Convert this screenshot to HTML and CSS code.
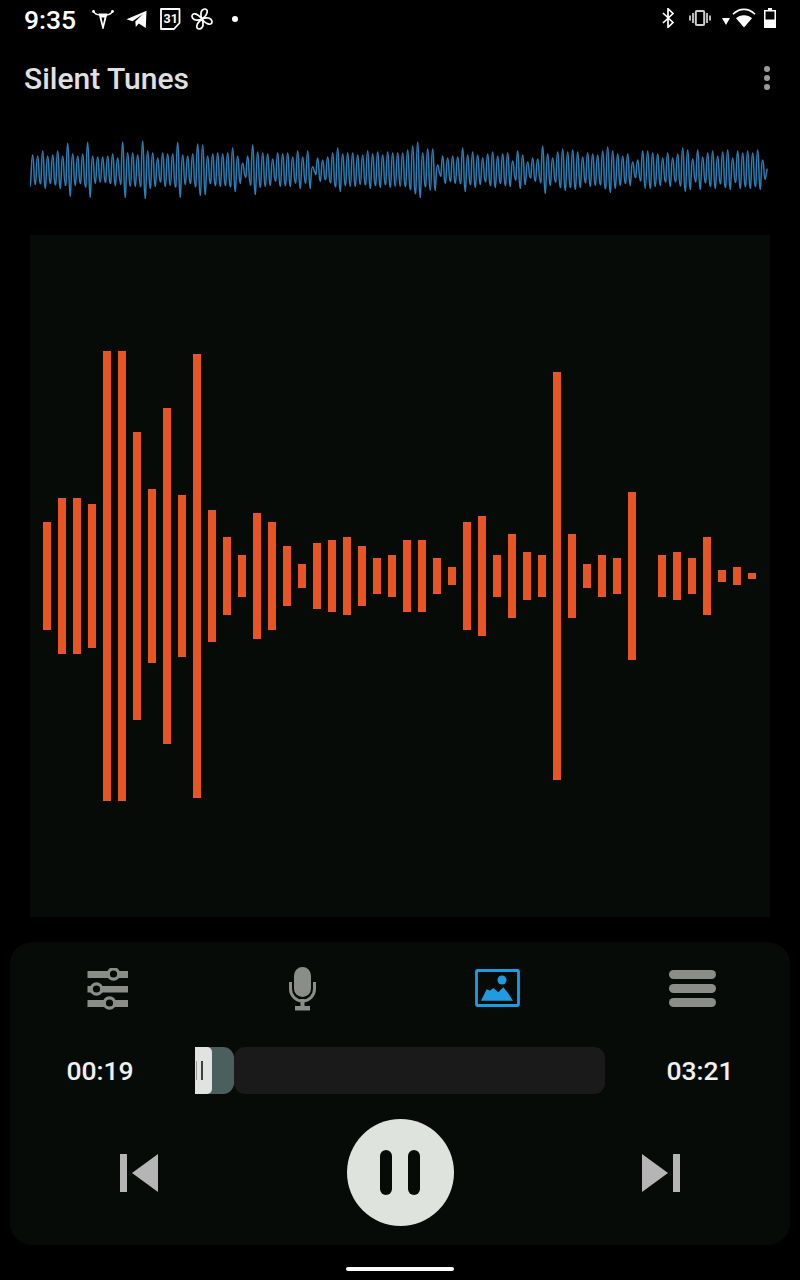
FILE: index.html
```html
<!DOCTYPE html>
<html lang="en">
<head>
  <meta charset="UTF-8">
  <title>Silent Tunes</title>
  <link rel="stylesheet" href="styles.css">
</head>
<body>
<div class="status-bar">
  <div class="status-left">
    <span class="clock">9:35</span>
    <svg class="ic ic-skull" width="22" height="20" viewBox="0 0 22 20">
      <path d="M1.500 2c1 3 3 3.800 6.500 4M20.500 2c-1 3-3 3.800-6.500 4" fill="none" stroke="#fff" stroke-width="1.500"/>
      <circle cx="1.500" cy="2.500" r="1.400" fill="#fff"/><circle cx="20.500" cy="2.500" r="1.400" fill="#fff"/>
      <path d="M6.500 4.500h9L13.800 11l-2.300 9h-1L8.200 11z" fill="#fff"/>
      <path d="M9.500 8.500h3L11 15z" fill="#000"/>
    </svg>
    <svg class="ic ic-plane" width="22" height="18" viewBox="0 0 22 18">
      <path d="M0.500 9.300 20.500 0.800 19.800 18 12.800 13.500 9.800 17 9.300 11.600 17 4 6.500 11.300z" fill="#fff"/>
    </svg>
    <svg class="ic ic-cal" width="22" height="22" viewBox="0 0 22 22">
      <path d="M2 1h18.500v14l-5.500 6H2z" fill="none" stroke="#fff" stroke-width="1.800" stroke-linejoin="round"/>
      <text x="4.500" y="15" class="cal-num">31</text>
    </svg>
    <svg class="ic ic-fan" width="22" height="22" viewBox="0 0 22 22" fill="none" stroke="#fff" stroke-width="1.700">
      <path d="M11 11C9 7 9.500 1.500 13.500 1 17.500 .8 17.500 6 11 11z"/>
      <path d="M11 11C9 7 9.500 1.500 13.500 1 17.500 .8 17.500 6 11 11z" transform="rotate(90 11 11)"/>
      <path d="M11 11C9 7 9.500 1.500 13.500 1 17.500 .8 17.500 6 11 11z" transform="rotate(180 11 11)"/>
      <path d="M11 11C9 7 9.500 1.500 13.500 1 17.500 .8 17.500 6 11 11z" transform="rotate(270 11 11)"/>
    </svg>
    <span class="dot"></span>
  </div>
  <div class="status-right">
    <svg class="ic ic-bt" width="13" height="20" viewBox="0 0 13 20">
      <path d="M1 5l10 9.500-5 4.800V.7l5 4.800L1 15" fill="none" stroke="#fff" stroke-width="1.700"/>
    </svg>
    <svg class="ic ic-vib" width="22" height="16" viewBox="0 0 22 16" fill="none">
      <rect x="6.800" y="1" width="8.400" height="14" rx="1.200" stroke="#d0d0d0" stroke-width="2"/>
      <path d="M4 3v10M1 5.500v5M18 3v10M21 5.500v5" stroke="#b8b8b8" stroke-width="2"/>
    </svg>
    <svg class="ic ic-tri" width="8" height="7" viewBox="0 0 8 7"><path d="M0 0h8L4 7z" fill="#fff"/></svg>
    <svg class="ic ic-wifi" width="24" height="20" viewBox="0 0 24 20">
      <path d="M12 19.500 4 10.200C6 8.500 9 7.300 12 7.300s6 1.200 8 2.900z" fill="#fff"/>
      <path d="M1 6.300C4 3 8 1.300 12 1.300s8 1.700 11 5" fill="none" stroke="#fff" stroke-width="1.700"/>
    </svg>
    <svg class="ic ic-bat" width="12" height="20" viewBox="0 0 12 20">
      <path d="M4 0h4v2h4v18H0V2h4z" fill="#fff"/>
      <rect x="1.500" y="3.500" width="9" height="8" fill="#000"/>
    </svg>
  </div>
</div>

<div class="app-bar">
  <h1 class="title">Silent Tunes</h1>
  <div class="kebab"><span></span><span></span><span></span></div>
</div>

<svg class="wave" width="740" height="80" viewBox="0 0 740 80">
  <path id="wave-line" fill="none" stroke="#2a80b8" stroke-width="1.500"/>
</svg>

<div class="visualizer" id="bars"></div>

<div class="panel">
  <div class="tabs">
    <div class="tab">
      <svg width="42" height="42" viewBox="0 0 42 42" class="ic-grey">
        <rect x="0.500" y="3" width="40.500" height="7"/>
        <rect x="0.500" y="18" width="40.500" height="6.500"/>
        <rect x="0.500" y="32" width="40.500" height="7"/>
        <circle cx="26.500" cy="6" r="5.200" fill="#070b08" stroke="#8a8d88" stroke-width="3.200"/>
        <circle cx="9.500" cy="21" r="5.200" fill="#070b08" stroke="#8a8d88" stroke-width="3.200"/>
        <circle cx="22.500" cy="35" r="5.200" fill="#070b08" stroke="#8a8d88" stroke-width="3.200"/>
      </svg>
    </div>
    <div class="tab">
      <svg width="27" height="44" viewBox="0 0 27 44" class="ic-grey">
        <rect x="5" y="0" width="17" height="30" rx="8.500"/>
        <path d="M1.500 15v7a12 12 0 0 0 24 0v-7" fill="none" stroke="#8a8d88" stroke-width="3"/>
        <rect x="11.500" y="32" width="4" height="9"/>
        <rect x="6" y="39" width="15" height="4.500"/>
      </svg>
    </div>
    <div class="tab tab-up">
      <svg width="45" height="38" viewBox="0 0 45 38">
        <rect x="1.500" y="1.500" width="42" height="35" rx="1" fill="none" stroke="#1f9be3" stroke-width="2.800"/>
        <circle cx="27" cy="11" r="4.500" fill="#1f9be3"/>
        <path d="M6 31.700 11.700 20.300 15 21.700 18.300 19 23.300 23.300 28.300 18.300 33 24 38 31.700z" fill="#1f9be3"/>
      </svg>
    </div>
    <div class="tab tab-up">
      <div class="burger"><span></span><span></span><span></span></div>
    </div>
  </div>

  <div class="seek">
    <span class="time time-left">00:19</span>
    <div class="seek-track">
      <div class="seek-played">
        <div class="seek-thumb"><i></i><i></i></div>
      </div>
      <div class="seek-rest"></div>
    </div>
    <span class="time time-right">03:21</span>
  </div>

  <div class="transport">
    <svg width="38" height="38" viewBox="0 0 38 38" class="ic-skip">
      <rect x="0" y="0" width="7" height="38"/>
      <path d="M12 19 38 0v38z"/>
    </svg>
    <div class="play-btn"><span></span><span></span></div>
    <svg width="38" height="38" viewBox="0 0 38 38" class="ic-skip">
      <rect x="31" y="0" width="7" height="38"/>
      <path d="M26 19 0 0v38z"/>
    </svg>
  </div>
</div>

<div class="home-area"><span class="home-bar"></span></div>

<script>
  // bar heights, left to right, 0 = silent slot
  const barHeights = [108,156,156,144,450,450,288,174,336,162,444,132,78,42,126,108,60,24,66,72,78,60,36,42,72,72,36,18,108,120,42,84,48,42,408,84,24,42,36,168,0,42,48,36,78,12,18,6];
  const barsEl = document.getElementById('bars');
  barHeights.forEach(h => {
    const b = document.createElement('span');
    b.className = 'bar';
    b.style.height = h + 'px';
    barsEl.appendChild(b);
  });

  // peak tops of the waveform, one every 5px
  const tops = [75,78,63,78,75,63,78,40,72,78,72,37,78,81,81,78,72,84,36,69,69,75,33,63,69,84,69,72,72,37,75,78,72,42,45,78,72,69,72,69,54,78,100,78,45,66,69,72,87,69,
    72,69,81,63,81,63,110,84,90,81,69,54,72,69,69,75,75,63,72,66,75,66,69,69,69,60,48,36,69,57,57,105,78,84,78,81,54,75,66,75,84,72,66,78,72,69,93,63,75,96,
    84,87,48,72,84,66,57,66,60,66,81,69,72,75,63,51,63,72,78,72,96,90,63,63,69,72,84,69,84,72,54,60,87,60,81,69,63,78,66,60,84,63,69,63,69,60,90];
  const mid = 39.7;
  const k = 1.5;
  let d = `M0 ${mid + 17}`;
  let px = 0;
  tops.forEach((t, i) => {
    const a = (119 - t) / 3;
    const x = 2.67 + i * 5;
    d += ` C${px + k} ${mid + a} ${x - k} ${mid - a} ${x} ${mid - a}`;
    d += ` C${x + k} ${mid - a} ${x + 2.5 - k} ${mid + a} ${x + 2.5} ${mid + a}`;
    px = x + 2.5;
  });
  d += ` C${px + 0.5} ${mid + 8} ${px + 1.5} ${mid + 2} ${px + 2} ${mid - 1}`;
  document.getElementById('wave-line').setAttribute('d', d);
</script>
</body>
</html>
```

FILE: styles.css
```css
* {
  box-sizing: border-box;
}
html, body {
  margin: 0;
  background: #000;
}
body {
  width: 800px;
  height: 1280px;
  overflow: hidden;
  font-family: 'Roboto', sans-serif;
  color: #fff;
  display: flex;
  flex-direction: column;
}
svg {
  display: block;
  flex: none;
}
.status-bar {
  height: 38px;
  display: flex;
  justify-content: space-between;
  align-items: center;
  padding: 0 24px;
}
.status-left, .status-right {
  display: flex;
  align-items: center;
}
.status-right .ic {
  margin-top: -3px;
}
.status-left .ic {
  margin-top: -1px;
}
.clock {
  font-size: 26.5px;
  font-weight: 500;
  width: 68px;
}
.status-left .ic-plane { margin-left: 12px; margin-top: 0; }
.ic-cal { margin-left: 11px; }
.ic-fan { margin-left: 10px; }
.dot {
  width: 6px;
  height: 6px;
  border-radius: 50%;
  background: #fff;
  margin: -1px 0 0 19px;
}
.cal-num {
  font-family: 'Roboto', sans-serif;
  font-size: 12.5px;
  font-weight: 700;
  fill: #fff;
}
.ic-bt { position: relative; left: 1px; }
.ic-vib { margin-left: 15px; }
.status-right .ic-tri { margin: 4px 0 0 11px; }
.ic-wifi { margin-left: 2px; }
.ic-bat { margin-left: 8px; }
.app-bar {
  height: 82px;
  display: flex;
  justify-content: space-between;
  align-items: center;
  padding: 0 30px 0 24px;
}
.title {
  margin: -2px 0 0;
  font-size: 30px;
  font-weight: 500;
  color: #e0e0e0;
}
.kebab {
  display: flex;
  flex-direction: column;
  gap: 3px;
  margin-top: -2px;
}
.kebab span {
  width: 6px;
  height: 6px;
  border-radius: 50%;
  background: #9a9a9a;
}
.wave {
  margin: 10px 0 0 30px;
}
.visualizer {
  margin: 25px 30px 0;
  height: 682px;
  background: #070b08;
  display: flex;
  align-items: center;
  gap: 7px;
  padding-left: 13px;
}
.bar {
  width: 8px;
  flex: none;
  background: #e85424;
}
.panel {
  margin: 25px 10px 0;
  height: 303px;
  background: #070b08;
  border-radius: 22px;
  padding-top: 23px;
}
.tabs {
  display: grid;
  grid-template-columns: repeat(4, 1fr);
  height: 48px;
  margin-bottom: 34px;
}
.tab {
  display: flex;
  align-items: center;
  justify-content: center;
}
.tab-up {
  padding-bottom: 2px;
}
.ic-grey {
  fill: #8a8d88;
}
.burger {
  display: flex;
  flex-direction: column;
  gap: 5px;
  width: 47px;
}
.burger span {
  height: 9px;
  border-radius: 5px;
  background: #8a8d88;
}
.seek {
  display: grid;
  grid-template-columns: 185px 1fr 185px;
  align-items: center;
  height: 47px;
  margin-bottom: 25px;
}
.time {
  font-size: 26.5px;
  font-weight: 500;
  color: #f0f0f0;
  text-align: center;
}
.time-left { padding-right: 5px; }
.time-right { padding-left: 5px; }
.seek-track {
  display: flex;
  height: 47px;
}
.seek-played {
  width: 39px;
  background: #4a5f5e;
  border-radius: 0 11px 11px 0;
}
.seek-thumb {
  width: 17px;
  height: 47px;
  background: #e0e3e0;
  border-radius: 0 5px 5px 0;
  display: flex;
  align-items: center;
  gap: 4px;
  padding-left: 1px;
}
.seek-thumb i {
  width: 1px;
  height: 19px;
  background: #999;
}
.seek-thumb i + i {
  width: 2px;
  background: #3f3f3f;
}
.seek-rest {
  flex: 1;
  background: #1a1a1a;
  border-radius: 11px;
}
.transport {
  display: flex;
  justify-content: space-between;
  align-items: center;
  padding: 0 110px;
  height: 107px;
}
.ic-skip {
  fill: #b5b5b5;
}
.play-btn {
  width: 107px;
  height: 107px;
  border-radius: 50%;
  background: #dfe3de;
  display: flex;
  align-items: center;
  justify-content: center;
  gap: 16px;
}
.play-btn span {
  width: 12px;
  height: 45px;
  border-radius: 6px;
  background: #070b08;
}
.home-area {
  flex: 1;
  display: flex;
  justify-content: center;
  padding-top: 22px;
}
.home-bar {
  width: 108px;
  height: 4px;
  border-radius: 2px;
  background: #fff;
}
```
